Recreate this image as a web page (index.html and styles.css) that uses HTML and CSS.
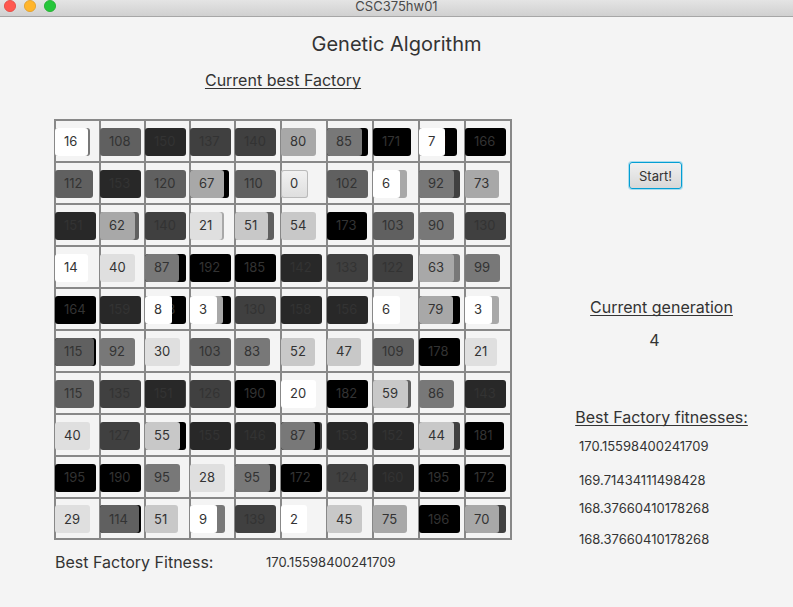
FILE: index.html
```html
<!DOCTYPE html>
<html lang="en">
<head>
<meta charset="utf-8">
<title>CSC375hw01</title>
<link rel="stylesheet" href="styles.css">
</head>
<body>
<header class="titlebar">
  <svg class="lights" width="60" height="16" viewBox="0 0 60 16" aria-hidden="true">
    <circle cx="10" cy="6" r="5.6" fill="#ff5850" stroke="#e2463f" stroke-width=".8"/>
    <circle cx="30" cy="6" r="5.6" fill="#ffb52c" stroke="#e09d26" stroke-width=".8"/>
    <circle cx="50" cy="6" r="5.6" fill="#26c63b" stroke="#1dac2c" stroke-width=".8"/>
  </svg>
  <span class="window-title">CSC375hw01</span>
</header>
<h1>Genetic Algorithm</h1>
<main class="layout">
  <section class="factory">
    <h2>Current best Factory</h2>
    <div class="board" id="board"></div>
    <div class="result"><span class="result-label">Best Factory Fitness:</span><output>170.15598400241709</output></div>
  </section>
  <aside class="side">
    <button class="start" type="button">Start!</button>
    <h2 class="generation-title">Current generation</h2>
    <p class="generation">4</p>
    <h2 class="fitness-title">Best Factory fitnesses:</h2>
    <ul class="fitnesses">
      <li>170.15598400241709</li>
      <li>169.71434111498428</li>
      <li>168.37660410178268</li>
      <li>168.37660410178268</li>
    </ul>
  </aside>
</main>
<script src="board.js"></script>
</body>
</html>
```
FILE: styles.css
```css
* { box-sizing: border-box; }
body {
  margin: 0;
  background: #f4f4f4;
  color: #333;
  font: 13px/20px Inter, "Liberation Sans", sans-serif;
}
h1, h2, p, ul { margin: 0; padding: 0; font-weight: 400; }
ul { list-style: none; }
button { font: inherit; color: inherit; border: 0; margin: 0; }

.titlebar {
  display: grid;
  grid-template-columns: 60px 1fr 60px;
  height: 17px;
  background: linear-gradient(#e4e4e4, #d0d0d0);
  border-bottom: 1px solid #a6a6a6;
}
.lights { display: block; }
.window-title {
  text-align: center;
  font-size: 13px;
  line-height: 13px;
  color: #4a4a4a;
}
h1 {
  margin-top: 15px;
  font-size: 20px;
  line-height: 24px;
  text-align: center;
}
h2 {
  font-size: 16px;
  line-height: 20px;
  text-decoration: underline 1px;
  text-underline-offset: 2px;
  text-decoration-skip-ink: none;
  text-align: center;
  white-space: nowrap;
}
.layout {
  display: flex;
  gap: 64px;
  padding: 0 45px 0 55px;
}
.factory { flex: 1; padding-top: 14px; }
.board {
  display: grid;
  grid-template-columns: repeat(4, 45fr) repeat(6, 46fr);
  grid-template-rows: repeat(9, 42px) 41px;
  margin-top: 30px;
}
.cell {
  display: grid;
  align-items: center;
  justify-items: start;
  padding-top: 1px;
  box-shadow: 0 0 0 1px #888, inset 0 0 0 1px #888;
}
.machine {
  grid-area: 1 / 1;
  height: 28px;
  padding: 0 0 0 9px;
  border-radius: 3px;
  text-align: left;
  line-height: 27px;
  overflow: hidden;
  white-space: nowrap;
}
.shade-0 { background: #fff; }
.shade-1 { background: #dfdfdf; }
.shade-2 { background: #c8c8c8; }
.shade-3 { background: #a8a8a8; }
.shade-4 { background: #787878; }
.shade-5 { background: #606060; }
.shade-6 { background: #404040; }
.shade-7 { background: #282828; }
.shade-8 { background: #000; }
.plain {
  background: linear-gradient(#f2f2f2, #dedede);
  box-shadow: inset 0 0 0 1px #bababa;
}
.result { display: flex; margin-top: 13px; }
.result-label { width: 211px; font-size: 16px; white-space: nowrap; }

.side { width: 173px; padding-top: 106px; }
.start {
  display: block;
  width: 53px;
  height: 27px;
  margin-left: 54px;
  padding: 0;
  border: 1px solid #039ed3;
  border-radius: 3px;
  background: linear-gradient(#f0f0f0, #d8d8d8);
  box-shadow: 0 0 0 1px #a8dcee;
  text-align: center;
}
.generation-title { margin-top: 108px; }
.generation { margin-top: 13px; padding-right: 14px; font-size: 16px; text-align: center; }
.fitness-title { margin-top: 57px; }
.fitnesses {
  display: grid;
  grid-template-rows: 34px 28px 31px 20px;
  margin-top: 9px;
  padding-left: 4px;
}
```
FILE: board.js
```js
// Each machine is "value:width"; machines further back in a cell follow after "/".
const rows = [
  "16:33/95:35 108:41 150:41 137:41 140:41 80:35 85:35/170:41 171:38 7:26/171:38 166:41",
  "112:38 153:41 120:41 67:34/177:39 110:41 0:27 102:41 6:27/72:34 92:35/130:41 73:34",
  "151:41 62:35/111:39 140:41 21:32/71:34 51:33/111:39 54:35 173:40 103:41 90:35 130:41",
  "14:33 40:35 87:34/180:41 192:41 185:41 142:41 133:41 122:40 63:35/100:41 99:35",
  "164:41 159:41 8:27/168:41 3:27/77:33/170:41 130:41 158:41 156:41 6:27 79:34/170:41 3:27/70:34",
  "115:39/170:41 92:35 30:35 103:41 83:35 52:34 47:34 109:41 178:41 21:32",
  "115:39 135:41 151:40/130:41 126:41 190:41 20:35 182:41 59:35/110:38 86:35 143:41",
  "40:35 127:40 55:35/170:41 155:41 146:41 87:34/171:39/130:41 153:41 152:41 44:35/130:41 181:39",
  "195:41 190:41 95:35 28:35 95:35/150:41 172:41 124:41 160:41 195:41 172:41",
  "29:35 114:39/170:41 51:33 9:27/90:35 139:41 2:26 45:35 75:34 196:41 70:34/130:41"
];
const board = document.getElementById("board");
for (const row of rows) {
  for (const stack of row.split(" ")) {
    const cell = document.createElement("div");
    cell.className = "cell";
    const items = stack.split("/").map(item => item.split(":").map(Number)).reverse();
    items.forEach(([value, width], i) => {
      const front = items[items.length - 1];
      const machine = document.createElement("button");
      machine.type = "button";
      const shade = Math.min(8, Math.floor((value - 1) / 20));
      machine.className = "machine " + (value === 0 ? "plain" : "shade-" + shade);
      machine.style.width = width + "px";
      // A covered machine shows its number only where the front one is narrow enough.
      const visible = i === items.length - 1 || (value > 99 && front[1] < 30 && items.length === 2);
      if (visible) machine.textContent = value;
      else machine.setAttribute("aria-label", value);
      cell.append(machine);
    });
    board.append(cell);
  }
}
```
